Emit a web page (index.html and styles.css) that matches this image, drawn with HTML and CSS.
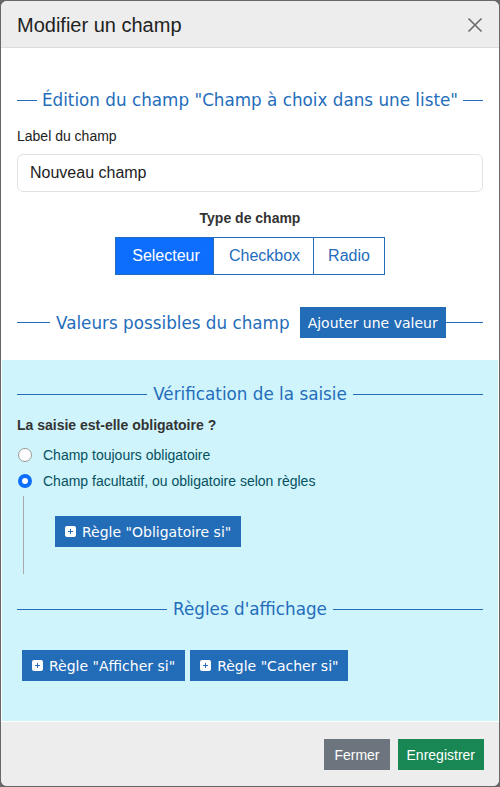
FILE: index.html
```html
<!DOCTYPE html>
<html lang="fr">
<head>
<meta charset="utf-8">
<title>Modifier un champ</title>
<link rel="stylesheet" href="styles.css">
</head>
<body>
<div class="modal">
  <div class="modal-header">
    <h1 class="modal-title">Modifier un champ</h1>
    <button class="close" aria-label="Fermer">
      <svg width="16" height="16" viewBox="0 0 16 16"><path d="M1.5 1.5 L14.5 14.5 M14.5 1.5 L1.5 14.5" stroke="#6a6a6a" stroke-width="1.6" fill="none"/></svg>
    </button>
  </div>
  <div class="modal-body">
    <div class="section">
      <div class="legend legend-first"><span class="legend-text">Édition du champ "Champ à choix dans une liste"</span></div>
      <label class="field-label">Label du champ</label>
      <div class="input">Nouveau champ</div>
      <div class="type-title">Type de champ</div>
      <div class="btn-group">
        <span class="seg active">Selecteur</span>
        <span class="seg">Checkbox</span>
        <span class="seg">Radio</span>
      </div>
      <div class="legend legend-values">
        <span class="legend-text">Valeurs possibles du champ</span>
        <span class="btn btn-blue btn-add">Ajouter une valeur</span>
      </div>
    </div>
    <div class="info">
      <div class="legend legend-center"><span class="legend-text">Vérification de la saisie</span></div>
      <div class="question">La saisie est-elle obligatoire ?</div>
      <div class="radio-row"><span class="radio"></span>Champ toujours obligatoire</div>
      <div class="radio-row second"><span class="radio checked"></span>Champ facultatif, ou obligatoire selon règles</div>
      <div class="rules-branch">
        <span class="btn btn-blue"><span class="plus"></span>Règle "Obligatoire si"</span>
      </div>
      <div class="legend legend-center legend-display"><span class="legend-text">Règles d'affichage</span></div>
      <div class="display-buttons">
        <span class="btn btn-blue"><span class="plus"></span>Règle "Afficher si"</span>
        <span class="btn btn-blue"><span class="plus"></span>Règle "Cacher si"</span>
      </div>
    </div>
  </div>
  <div class="modal-footer">
    <span class="btn btn-grey">Fermer</span>
    <span class="btn btn-green">Enregistrer</span>
  </div>
</div>
</body>
</html>
```

FILE: styles.css
```css
html, body {
  margin: 0;
  padding: 0;
}
body {
  background: #676767;
  font-family: "Liberation Sans", Arial, sans-serif;
  width: 500px;
  height: 787px;
  overflow: hidden;
}
.modal {
  margin: 1px;
  width: 498px;
  height: 785px;
  background: #fff;
  border-radius: 6px;
  overflow: hidden;
  display: flex;
  flex-direction: column;
}
.modal-header {
  height: 46px;
  flex: 0 0 46px;
  background: #ededed;
  border-bottom: 1px solid #dcdcdc;
  display: flex;
  align-items: center;
  justify-content: space-between;
  padding: 0 16px 0 16px;
}
.modal-title {
  margin: 0;
  font-size: 20px;
  font-weight: normal;
  color: #222;
  line-height: 24px;
  padding-top: 1px;
}
.close {
  border: 0;
  background: none;
  padding: 0;
  width: 16px;
  height: 16px;
  margin-top: 1px;
  display: block;
}
.close svg { display: block; }
.modal-body {
  flex: 1;
  display: flex;
  flex-direction: column;
}
.section {
  padding: 42px 16px 0 16px;
  display: flex;
  flex-direction: column;
}
.legend {
  display: flex;
  align-items: center;
  height: 20px;
  color: #236dbb;
}
.legend::before, .legend::after {
  content: "";
  height: 1px;
  background: #236dbb;
  flex: 1;
}
.legend-text {
  font-family: "DejaVu Sans", Verdana, sans-serif;
  font-size: 16.8px;
  line-height: 20px;
  padding: 0 6px;
  white-space: nowrap;
}
.legend-first::before,
.legend-first::after {
  flex: 0 0 20px;
}
.legend-first .legend-text { flex: 1; text-align: center; padding: 0 4px; }
.field-label {
  font-size: 14px;
  line-height: 17px;
  color: #222;
  margin-top: 18px;
}
.input {
  margin-top: 9px;
  height: 38px;
  box-sizing: border-box;
  border: 1px solid #dee2e6;
  border-radius: 6px;
  padding: 0 12px;
  font-size: 16px;
  line-height: 36px;
  color: #222;
}
.type-title {
  margin-top: 18px;
  text-align: center;
  font-weight: bold;
  font-size: 14px;
  line-height: 17px;
  color: #333;
}
.btn-group {
  margin: 10px auto 0 auto;
  display: flex;
  height: 38px;
  box-sizing: border-box;
  border: 1px solid #236dbb;
}
.seg {
  font-size: 16px;
  line-height: 36px;
  color: #236dbb;
  text-align: center;
  border-left: 1px solid #236dbb;
}
.seg:first-child { border-left: 0; width: 97px; padding-left: 3px; box-sizing: border-box; }
.seg:nth-child(2) { width: 100px; padding-left: 2px; box-sizing: border-box; }
.seg:nth-child(3) { width: 70px; }
.seg.active {
  background: #0d6efd;
  color: #fff;
}
.legend-values {
  margin-top: 32px;
  height: 31px;
}
.legend-values::before { flex: 0 0 33px; }
.legend-values::after { flex: 1; }
.legend-values .legend-text { padding: 0 5px 0 6px; }
.legend-values .btn-add {
  margin-left: 5px;
  padding: 0 8px;
  font-size: 14px;
}
.btn {
  display: inline-flex;
  align-items: center;
  height: 31px;
  box-sizing: border-box;
  padding: 0 10px;
  color: #fff;
  white-space: nowrap;
}
.btn-blue {
  background: #236cb8;
  font-family: "DejaVu Sans", Verdana, sans-serif;
  font-size: 14px;
}
.info {
  margin: 22px 1px 0 1px;
  background: #cff4fc;
  padding: 24px 15px 40px 15px;
  border-bottom: 1px solid #fff;
  display: flex;
  flex-direction: column;
}
.legend-center::before, .legend-center::after { flex: 1; }
.question {
  margin-top: 13px;
  font-weight: bold;
  font-size: 14px;
  line-height: 17px;
  color: #333;
}
.radio-row {
  margin-top: 11px;
  display: flex;
  align-items: center;
  height: 20px;
  font-size: 14px;
  color: #055160;
}
.radio-row.second { margin-top: 6px; }
.radio {
  width: 14px;
  height: 14px;
  box-sizing: border-box;
  border: 1px solid #9a9a9a;
  border-radius: 50%;
  background: #fff;
  margin-right: 11px;
  margin-left: 1px;
  flex: 0 0 14px;
}
.radio.checked {
  background: #fff;
  border: 4.5px solid #0d6efd;
}
.rules-branch {
  margin: 5px 0 0 6px;
  border-left: 1px solid #a9a9a9;
  padding: 20px 0 27px 31px;
  display: flex;
}
.plus {
  width: 11px;
  height: 11px;
  background: #fff;
  border-radius: 2px;
  margin-right: 6px;
  position: relative;
  flex: 0 0 11px;
}
.plus::before, .plus::after {
  content: "";
  position: absolute;
  background: #236cb8;
}
.plus::before { left: 3px; top: 4.8px; width: 5px; height: 1.5px; }
.plus::after { left: 4.75px; top: 3px; width: 1.5px; height: 5px; }
.legend-display { margin-top: 25px; }
.display-buttons {
  margin: 31px 0 0 5px;
  display: flex;
  gap: 5px;
}
.modal-footer {
  flex: 1;
  background: #ededed;
  display: flex;
  justify-content: flex-end;
  align-items: flex-start;
  gap: 8px;
  padding: 17px 15px 0 0;
}
.btn-grey {
  background: #6c757d;
  font-size: 14px;
  padding: 0 10px;
}
.btn-green {
  background: #198754;
  font-size: 14px;
  padding: 0 9px;
}
```
